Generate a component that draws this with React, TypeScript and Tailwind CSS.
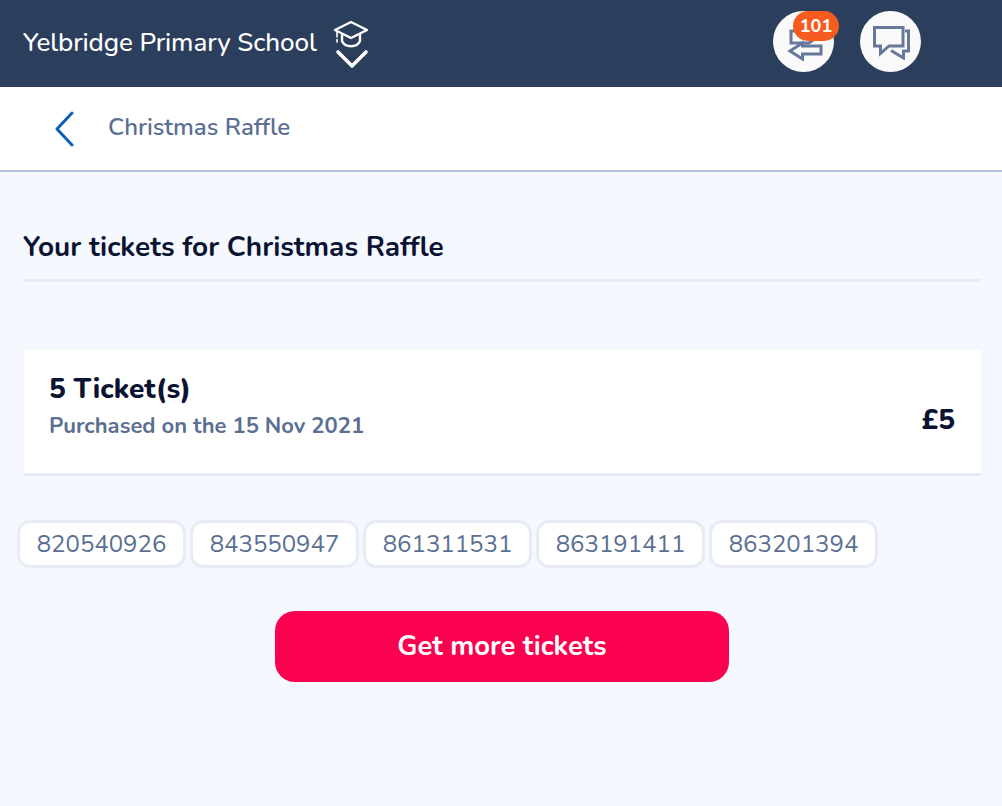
const tickets = ['820540926', '843550947', '861311531', '863191411', '863201394'];

function SchoolIcon() {
  return (
    <svg width="36" height="50" viewBox="0 0 36 50" fill="none" stroke="#fff" strokeLinecap="round" strokeLinejoin="round">
      <path d="M18 3 L34 11 L18 19 L2 11 Z" strokeWidth="2.4" />
      <path d="M9 16 V22 C12 29 24 29 27 22 V16" strokeWidth="2.4" />
      <path d="M4 13 V23" strokeWidth="1.6" strokeDasharray="5 2.5" />
      <path d="M5 33 L19 47 L33 33" strokeWidth="3.6" />
    </svg>
  );
}

function ArrowsIcon() {
  return (
    <svg width="38" height="38" viewBox="0 0 38 38" fill="none" stroke="#66799b" strokeWidth="3" strokeLinejoin="miter">
      <path d="M6 8 H24 V4 L35 12 L24 20 H6 Z" />
      <path d="M36 23 H17.5 V20 L5 28 L17.5 36 V31 H36 Z" fill="#fafafa" />
    </svg>
  );
}

function ChatIcon() {
  return (
    <svg width="38" height="36" viewBox="0 0 38 36" fill="none" stroke="#66799b" strokeWidth="3">
      <path d="M2.5 3.5 H31 V22 H17 L8.5 29.5 V22 H2.5 Z" />
      <path d="M33 7 H36.5 V27 H31.5 V34 L19 26.5" />
    </svg>
  );
}

export default function App() {
  return (
    <div className="min-h-[806px] bg-[#f5f8ff] font-['Nunito','Noto_Sans',sans-serif]">
      <header className="h-[87px] bg-[#2b3e5c] flex items-center pl-[23px] text-white">
        <h1 className="w-[294px] mb-[2px] text-[26px] font-medium tracking-[-0.1px] whitespace-nowrap">Yelbridge Primary School</h1>
        <div className="ml-[16px] mt-[1px]"><SchoolIcon /></div>
        <div className="ml-[404px] mt-[-4px] relative w-[61px] h-[61px] rounded-full bg-[#fafafa] flex items-center justify-center">
          <ArrowsIcon />
          <span className="absolute left-[20px] top-[0px] w-[46px] h-[30px] rounded-full bg-[#f65c1f] text-[18px] font-bold flex items-center justify-center">101</span>
        </div>
        <div className="ml-[26px] mt-[-4px] w-[61px] h-[61px] rounded-full bg-[#fafafa] flex items-center justify-center"><ChatIcon /></div>
      </header>

      <div className="h-[85px] bg-white border-b-2 border-[#b4c0da] flex items-center pl-[54px]">
        <svg width="20" height="36" viewBox="0 0 20 36" fill="none" stroke="#0a62b8" strokeWidth="3" strokeLinecap="round" strokeLinejoin="round">
          <path d="M18 2 L3 18 L18 34" />
        </svg>
        <span className="ml-[34px] mb-[4px] text-[24px] font-semibold text-[#5a6f92]">Christmas Raffle</span>
      </div>

      <main className="px-[24px] pt-[55px]">
        <div className="mr-[-3px] pb-[12px] border-b-[3px] border-[#e7ebf5]">
          <h2 className="text-[28px] leading-[40px] font-bold text-[#0b1333] ml-[-1px]">Your tickets for Christmas Raffle</h2>
        </div>

        <div className="mt-[68px] mr-[-3px] h-[126px] bg-white border-b-[3px] border-[#e7ebf5] flex items-center justify-between px-[25px]">
          <div className="mt-[-10px]">
            <div className="text-[28px] leading-[34px] font-extrabold text-[#0b1333]">5 Ticket(s)</div>
            <div className="mt-[5px] text-[22px] leading-[30px] font-bold text-[#5a6f92]">Purchased on the 15 Nov 2021</div>
          </div>
          <div className="text-[28px] font-extrabold text-[#0b1333] mt-[17px] mr-[1px]">£5</div>
        </div>

        <div className="mt-[44px] ml-[-7px] flex gap-[4px]">
          {tickets.map(t => (
            <div key={t} className="w-[169px] h-[48px] rounded-[13px] bg-white border-[3px] border-[#e7ebf5] flex items-center justify-center text-[24px] text-[#5a6f92]">
              {t}
            </div>
          ))}
        </div>

        <div className="mt-[43px] flex justify-center">
          <button className="ml-[2px] w-[454px] h-[71px] rounded-[20px] bg-[#fb0250] text-white text-[27.4px] font-bold">Get more tickets</button>
        </div>
      </main>
    </div>
  );
}
